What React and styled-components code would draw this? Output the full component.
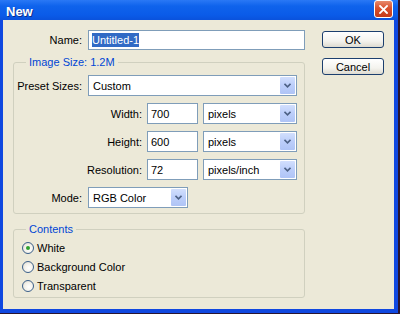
import React from "react";
import styled, { createGlobalStyle } from "styled-components";

const GlobalStyle = createGlobalStyle`
  html, body {
    margin: 0;
    padding: 0;
    background: #2a1530;
    width: 400px;
    height: 314px;
    overflow: hidden;
  }
`;

const Window = styled.div`
  width: 398px;
  height: 313px;
  background: #1048e0;
  display: flex;
  flex-direction: column;
  font-family: "Liberation Sans", Arial, sans-serif;
  font-size: 11px;
  color: #000;
`;

const TitleBar = styled.div`
  height: 20px;
  flex-shrink: 0;
  display: flex;
  align-items: center;
  justify-content: space-between;
  padding: 0 5px 0 6px;
  background: linear-gradient(180deg, #2a78f5 0%, #0f63ec 30%, #0a5be8 75%, #0a52dc 100%);
`;

const Title = styled.span`
  color: #fff;
  font-weight: bold;
  font-size: 13px;
  text-shadow: 1px 1px 0 #0a2f8a;
  margin-top: 2px;
`;

const CloseButton = styled.div`
  width: 19px;
  height: 18px;
  margin-top: -2px;
  box-sizing: border-box;
  border: 1px solid #fff;
  border-radius: 3px;
  background: linear-gradient(180deg, #e88a6c 0%, #d9502d 45%, #c33a1a 100%);
  display: flex;
  align-items: center;
  justify-content: center;
`;

const Client = styled.div`
  flex: 1;
  margin: 0 4px 4px 3px;
  background: #ece9d8;
  display: flex;
  padding: 10px 0 0 10px;
  gap: 17px;
`;

const LeftCol = styled.div`
  width: 292px;
  display: flex;
  flex-direction: column;
`;

const RightCol = styled.div`
  display: flex;
  flex-direction: column;
  gap: 10px;
  padding-top: 1px;
`;

const Row = styled.div`
  display: flex;
  align-items: center;
  height: ${({ $h }) => $h || 21}px;
  gap: ${({ $gap }) => $gap || 6}px;
`;

const Label = styled.span`
  width: ${({ $w }) => $w}px;
  text-align: right;
  flex-shrink: 0;
  white-space: nowrap;
`;

const Field = styled.div`
  box-sizing: border-box;
  height: 100%;
  width: ${({ $w }) => ($w ? `${$w}px` : "auto")};
  flex: ${({ $w }) => ($w ? "none" : 1)};
  border: 1px solid #7f9db9;
  background: #fff;
  display: flex;
  align-items: center;
  padding-left: ${({ $pad }) => $pad ?? 3}px;
`;

const Selected = styled.span`
  background: #316ac5;
  color: #fff;
  padding: 1px 0;
`;

const SelectText = styled.span`
  flex: 1;
  padding-left: 4px;
  white-space: nowrap;
`;

const ArrowBtn = styled.div`
  width: 15px;
  height: calc(100% - 2px);
  margin-right: 1px;
  border-radius: 1px;
  background: linear-gradient(180deg, #d2dffd 0%, #bccefa 50%, #afc4f6 100%);
  display: flex;
  align-items: center;
  justify-content: center;
`;

const Group = styled.fieldset`
  margin: ${({ $mt }) => $mt}px 0 0 0;
  padding: ${({ $pt }) => $pt}px 7px ${({ $pb }) => $pb}px 0;
  border: 1px solid #d0d0bf;
  border-radius: 3px;
  display: flex;
  flex-direction: column;
  gap: ${({ $gap }) => $gap}px;
  min-width: 0;
`;

const Legend = styled.legend`
  color: #0046d5;
  padding: 0 3px;
  margin-left: 12px;
  line-height: 13px;
`;

const RadioRow = styled.label`
  display: flex;
  align-items: center;
  gap: 3px;
  height: 19px;
  padding-left: 8px;
`;

const RadioCircle = styled.span`
  width: 12px;
  height: 12px;
  box-sizing: border-box;
  border-radius: 50%;
  border: 1px solid #3a5f8a;
  background: radial-gradient(circle at 60% 60%, #ffffff 0%, #f3f1ea 50%, #d8d4c6 100%);
  display: flex;
  align-items: center;
  justify-content: center;
`;

const Dot = styled.span`
  width: 4px;
  height: 4px;
  border-radius: 50%;
  background: #2fa12f;
`;

const Button = styled.div`
  width: 62px;
  height: 17px;
  box-sizing: border-box;
  border: 1px solid #1c3f6e;
  border-radius: 3px;
  background: linear-gradient(180deg, #ffffff 0%, #f4f3ee 60%, #dedbd0 100%);
  display: flex;
  align-items: center;
  justify-content: center;
  font-size: 11px;
`;

const Chevron = () => (
  <svg width="7" height="5" viewBox="0 0 7 5">
    <path d="M0.5 0.8 L3.5 3.8 L6.5 0.8" fill="none" stroke="#4d6185" strokeWidth="1.6" />
  </svg>
);

const CloseX = () => (
  <svg width="9" height="9" viewBox="0 0 9 9">
    <path d="M1 1 L8 8 M8 1 L1 8" stroke="#fff" strokeWidth="1.8" strokeLinecap="square" />
  </svg>
);

const Select = ({ value, w }) => (
  <Field $w={w} $pad={0}>
    <SelectText>{value}</SelectText>
    <ArrowBtn>
      <Chevron />
    </ArrowBtn>
  </Field>
);

const Radio = ({ checked, children }) => (
  <RadioRow>
    <RadioCircle>{checked && <Dot />}</RadioCircle>
    {children}
  </RadioRow>
);

export default function App() {
  return (
    <>
      <GlobalStyle />
      <Window>
        <TitleBar>
          <Title>New</Title>
          <CloseButton>
            <CloseX />
          </CloseButton>
        </TitleBar>
        <Client>
          <LeftCol>
            <Row $h={20}>
              <Label $w={69}>Name:</Label>
              <Field>
                <Selected>Untitled-1</Selected>
              </Field>
            </Row>

            <Group $mt={6} $pt={6} $pb={5} $gap={7}>
              <Legend>Image Size: 1.2M</Legend>
              <Row>
                <Label $w={68}>Preset Sizes:</Label>
                <Select value="Custom" />
              </Row>
              <Row $gap={5}>
                <Label $w={128}>Width:</Label>
                <Field $w={51}>700</Field>
                <Select value="pixels" w={94} />
              </Row>
              <Row $gap={5}>
                <Label $w={128}>Height:</Label>
                <Field $w={51}>600</Field>
                <Select value="pixels" w={94} />
              </Row>
              <Row $gap={5}>
                <Label $w={128}>Resolution:</Label>
                <Field $w={51}>72</Field>
                <Select value="pixels/inch" w={94} />
              </Row>
              <Row>
                <Label $w={68}>Mode:</Label>
                <Select value="RGB Color" w={100} />
              </Row>
            </Group>

            <Group $mt={9} $pt={2} $pb={2} $gap={0}>
              <Legend>Contents</Legend>
              <Radio checked>White</Radio>
              <Radio>Background Color</Radio>
              <Radio>Transparent</Radio>
            </Group>
          </LeftCol>

          <RightCol>
            <Button>OK</Button>
            <Button>Cancel</Button>
          </RightCol>
        </Client>
      </Window>
    </>
  );
}
